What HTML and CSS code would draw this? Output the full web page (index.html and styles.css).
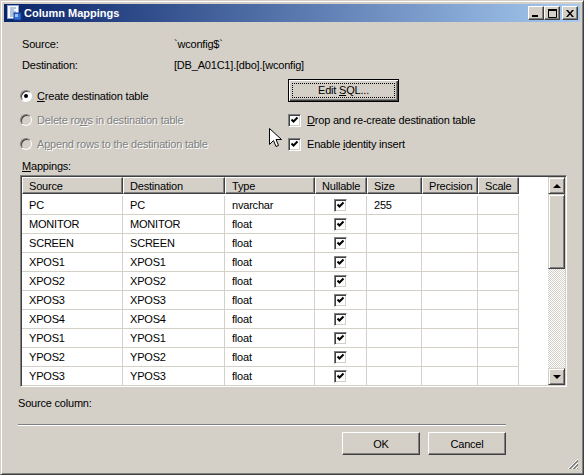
FILE: index.html
```html
<!DOCTYPE html>
<html>
<head>
    <link rel="stylesheet" href="styles.css">
</head>
<body>
    <div class="window">
        <div class="titlebar">
            <span class="app-icon">
                <svg width="16" height="16" viewBox="0 0 16 16">
                    <rect x="1.5" y="0.5" width="11" height="13" fill="#f4f8ff" stroke="#8ca4c8"/>
                    <path d="M4 3h6M4 5h4M4 7h6M4 9h4M4 11h3" stroke="#6f8fbf" stroke-width="1"/>
                    <rect x="8" y="8" width="7" height="7" fill="#2f6fd8" stroke="#1b3f8f"/>
                    <rect x="9" y="9" width="3" height="3" fill="#9cc4ff"/>
                </svg>
            </span>
            <span class="title">Column Mappings</span>
            <div class="caption-buttons">
                <span class="cap-btn">
                    <svg width="8" height="7" viewBox="0 0 8 7"><rect x="0" y="5" width="6" height="2" fill="#000"/></svg>
                </span>
                <span class="cap-btn">
                    <svg width="9" height="9" viewBox="0 0 9 9"><path d="M0.5 0.5h8v8h-8z" fill="none" stroke="#000"/><rect x="0" y="0" width="9" height="2" fill="#000"/></svg>
                </span>
                <span class="cap-btn close-btn">
                    <svg width="8" height="7" viewBox="0 0 8 7"><path d="M0 0h2l2 2.5L6 0h2L5 3.5 8 7H6L4 4.5 2 7H0l3-3.5z" fill="#000"/></svg>
                </span>
            </div>
        </div>

        <div class="content">
            <div class="info">
                <span>Source:</span><span>`wconfig$`</span>
                <span>Destination:</span><span>[DB_A01C1].[dbo].[wconfig]</span>
            </div>

            <div class="options">
                <div class="radios">
                    <label class="radio-row"><span class="radio checked"></span><span><u>C</u>reate destination table</span></label>
                    <label class="radio-row disabled"><span class="radio"></span><span>Delete ro<u>w</u>s in destination table</span></label>
                    <label class="radio-row disabled"><span class="radio"></span><span>A<u>p</u>pend rows to the destination table</span></label>
                </div>
                <div class="right-opts">
                    <button class="win-btn default-btn"><span class="focus-rect">Edit <u>S</u>QL...</span></button>
                    <label class="check-row"><span class="checkbox checked"></span><span><u>D</u>rop and re-create destination table</span></label>
                    <label class="check-row"><span class="checkbox checked"></span><span>Enable <u>i</u>dentity insert</span></label>
                </div>
            </div>

            <div class="mappings-label"><u>M</u>appings:</div>

            <div class="grid-box">
                <div class="grid-area">
                    <div class="grid">
                        <div class="hcell">Source</div>
                        <div class="hcell">Destination</div>
                        <div class="hcell">Type</div>
                        <div class="hcell">Nullable</div>
                        <div class="hcell">Size</div>
                        <div class="hcell">Precision</div>
                        <div class="hcell">Scale</div>
                    </div>
                    <div class="grid" id="grid-rows"></div>
                </div>
                <div class="vscroll">
                    <span class="sb-btn"><span class="arrow-up"></span></span>
                    <span class="sb-thumb"></span>
                    <span class="sb-track"></span>
                    <span class="sb-btn"><span class="arrow-down"></span></span>
                </div>
            </div>

            <div class="source-col">Source column:</div>

            <div class="footer">
                <div class="sep"></div>
                <div class="buttons">
                    <button class="win-btn dlg-btn">OK</button>
                    <button class="win-btn dlg-btn">Cancel</button>
                </div>
            </div>
        </div>

        <!-- size grip in the corner -->
        <svg class="grip" width="12" height="12" viewBox="0 0 12 12">
            <path d="M11 1L1 11M11 5L5 11M11 9L9 11" stroke="#fff" stroke-width="1"/>
            <path d="M11 2L2 11M11 3L3 11M11 6L6 11M11 7L7 11M11 10L10 11" stroke="#808080" stroke-width="1"/>
        </svg>

        <!-- mouse pointer from the screenshot -->
        <svg class="cursor" width="13" height="21" viewBox="0 0 13 21">
            <path d="M0.5 0.5V16.5L4.5 12.5L7 18.5L9.5 17.5L7 11.5H12.5Z" fill="#fff" stroke="#000" stroke-width="1"/>
        </svg>
    </div>

    <script>
        const rows = [
            ['PC', 'PC', 'nvarchar', '255'],
            ['MONITOR', 'MONITOR', 'float', ''],
            ['SCREEN', 'SCREEN', 'float', ''],
            ['XPOS1', 'XPOS1', 'float', ''],
            ['XPOS2', 'XPOS2', 'float', ''],
            ['XPOS3', 'XPOS3', 'float', ''],
            ['XPOS4', 'XPOS4', 'float', ''],
            ['YPOS1', 'YPOS1', 'float', ''],
            ['YPOS2', 'YPOS2', 'float', ''],
            ['YPOS3', 'YPOS3', 'float', '']
        ];
        const gridRows = document.getElementById('grid-rows');

        rows.forEach(r => {
            gridRows.insertAdjacentHTML('beforeend',
                `<div class="cell">${r[0]}</div>` +
                `<div class="cell">${r[1]}</div>` +
                `<div class="cell">${r[2]}</div>` +
                `<div class="cell center"><span class="checkbox checked"></span></div>` +
                `<div class="cell">${r[3]}</div>` +
                `<div class="cell"></div>` +
                `<div class="cell"></div>`);
        });
    </script>
</body>
</html>
```

FILE: styles.css
```css
body {
    margin: 0;
    background-color: #d4d0c8;
    font-family: "Liberation Sans", Arial, sans-serif;
    font-size: 11px;
    letter-spacing: -0.2px;
    color: #000;
}

u {
    text-decoration: underline;
    text-underline-offset: 1px;
}

.window {
    position: relative;
    width: 584px;
    height: 475px;
    box-sizing: border-box;
    border: 1px solid;
    border-color: #d4d0c8 #404040 #404040 #d4d0c8;
    box-shadow: inset 1px 1px #fff, inset -1px -1px #808080;
    padding: 3px;
    overflow: hidden;
}

/* Title bar */
.titlebar {
    height: 18px;
    display: flex;
    align-items: center;
    background: linear-gradient(to right, #0a246a, #a6caf0);
    color: #fff;
}

.app-icon {
    width: 16px;
    height: 16px;
    margin-left: 2px;
    margin-right: 2px;
}

.title {
    font-weight: bold;
    letter-spacing: 0;
}

.caption-buttons {
    margin-left: auto;
    margin-right: 2px;
    display: flex;
}

.cap-btn {
    width: 16px;
    height: 14px;
    box-sizing: border-box;
    background-color: #d4d0c8;
    border: 1px solid;
    border-color: #fff #404040 #404040 #fff;
    box-shadow: inset -1px -1px #808080;
    display: flex;
    align-items: center;
    justify-content: center;
}

.close-btn {
    margin-left: 2px;
}

/* Body of dialog */
.content {
    padding: 16px 13px 0 14px;
}

.info {
    display: grid;
    grid-template-columns: 152px auto;
    row-gap: 8px;
    line-height: 13px;
    margin-left: 4px;
}

.options {
    display: flex;
    margin-top: 7px;
    height: 77px;
}

.radios {
    width: 268px;
    margin-left: 2px;
    padding-top: 5px;
}

.radio-row, .check-row {
    display: flex;
    align-items: center;
    height: 24px;
    gap: 5px;
}

.check-row {
    gap: 6px;
}

.radio {
    width: 12px;
    height: 12px;
    box-sizing: border-box;
    border-radius: 50%;
    border: 1px solid;
    border-color: #808080 #fff #fff #808080;
    box-shadow: inset 1px 1px #404040;
    background-color: #fff;
    position: relative;
}

.radio.checked::after {
    content: '';
    position: absolute;
    left: 3px;
    top: 3px;
    width: 4px;
    height: 4px;
    border-radius: 50%;
    background-color: #000;
}

.disabled {
    color: #808080;
    text-shadow: 1px 1px #fff;
}

.disabled .radio {
    background-color: #d4d0c8;
}

.checkbox {
    display: inline-block;
    width: 13px;
    height: 13px;
    box-sizing: border-box;
    border: 1px solid;
    border-color: #808080 #fff #fff #808080;
    box-shadow: inset 1px 1px #404040, inset -1px -1px #d4d0c8;
    background-color: #fff;
}

.checkbox.checked {
    background-image: url("data:image/svg+xml,%3Csvg xmlns='http://www.w3.org/2000/svg' width='11' height='11'%3E%3Cpath d='M2.5 4.5l2 2 4-4' fill='none' stroke='%23000' stroke-width='2'/%3E%3C/svg%3E");
    background-repeat: no-repeat;
}

.right-opts {
    display: flex;
    flex-direction: column;
}

.win-btn {
    font-family: inherit;
    font-size: 11px;
    letter-spacing: -0.2px;
    color: #000;
    background-color: #d4d0c8;
    border: 1px solid;
    border-color: #fff #404040 #404040 #fff;
    box-shadow: inset -1px -1px #808080;
    padding: 0;
}

.default-btn {
    width: 111px;
    height: 23px;
    margin-bottom: 6px;
    border: 1px solid #000;
    box-shadow: inset 1px 1px #fff, inset -1px -1px #404040, inset -2px -2px #808080;
    display: flex;
    padding: 3px;
}

.focus-rect {
    flex: 1;
    border: 1px dotted #000;
    line-height: 13px;
    text-align: center;
}

.mappings-label {
    margin-top: 4px;
    margin-left: 4px;
    line-height: 13px;
}

/* Mapping grid */
.grid-box {
    margin-top: 2px;
    margin-left: 2px;
    height: 212px;
    box-sizing: border-box;
    border: 1px solid;
    border-color: #808080 #fff #fff #808080;
    box-shadow: inset 1px 1px #404040, inset -1px -1px #d4d0c8;
    padding: 1px;
    display: flex;
}

.grid-area {
    flex: 1;
    background-color: #fff;
}

.grid {
    display: grid;
    grid-template-columns: 101px 102px 90px 52px 55px 56px 41px;
    grid-auto-rows: 19px;
}

.hcell {
    height: 17px;
    box-sizing: border-box;
    background-color: #d4d0c8;
    border: 1px solid;
    border-color: #fff #404040 #404040 #fff;
    box-shadow: inset -1px -1px #808080;
    padding-left: 6px;
    display: flex;
    align-items: center;
}

.cell {
    box-sizing: border-box;
    border-right: 1px solid #d4d0c8;
    border-bottom: 1px solid #d4d0c8;
    padding-left: 7px;
    display: flex;
    align-items: center;
}

.cell.center {
    justify-content: center;
    padding-left: 0;
}

.vscroll {
    width: 17px;
    display: flex;
    flex-direction: column;
}

.sb-btn {
    height: 17px;
    box-sizing: border-box;
    background-color: #d4d0c8;
    border: 1px solid;
    border-color: #d4d0c8 #404040 #404040 #d4d0c8;
    box-shadow: inset 1px 1px #fff, inset -1px -1px #808080;
    display: flex;
    align-items: center;
    justify-content: center;
}

.arrow-up, .arrow-down {
    width: 0;
    height: 0;
    border-left: 4px solid transparent;
    border-right: 4px solid transparent;
}

.arrow-up {
    border-bottom: 4px solid #000;
}

.arrow-down {
    border-top: 4px solid #000;
}

.sb-thumb {
    height: 75px;
    box-sizing: border-box;
    background-color: #d4d0c8;
    border: 1px solid;
    border-color: #d4d0c8 #404040 #404040 #d4d0c8;
    box-shadow: inset 1px 1px #fff, inset -1px -1px #808080;
}

.sb-track {
    flex: 1;
    background: repeating-conic-gradient(#d4d0c8 0 25%, #fff 0 50%) 0 0 / 2px 2px;
}

.source-col {
    margin-top: 10px;
    line-height: 13px;
}

.footer {
    width: 488px;
}

.sep {
    margin-top: 14px;
    border-top: 1px solid #808080;
    border-bottom: 1px solid #fff;
}

.buttons {
    display: flex;
    justify-content: flex-end;
    gap: 8px;
    margin-top: 6px;
}

.dlg-btn {
    width: 78px;
    height: 23px;
}

.grip {
    position: absolute;
    right: 4px;
    bottom: 4px;
}

.cursor {
    position: absolute;
    left: 268px;
    top: 127px;
}
```
